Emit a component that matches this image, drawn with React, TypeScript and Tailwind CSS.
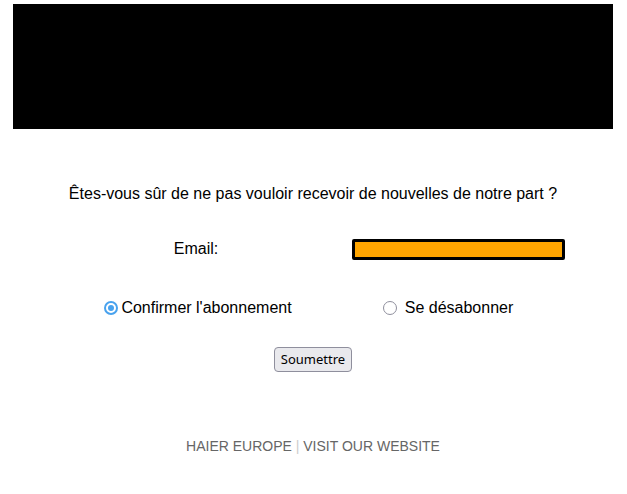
import React, { useState } from 'react';

interface RadioProps {
    checked: boolean;
    onSelect: () => void;
}

const Radio: React.FC<RadioProps> = ({ checked, onSelect }) => (
    <span
        role="radio"
        aria-checked={checked}
        onClick={onSelect}
        className={`flex h-[14px] w-[14px] shrink-0 cursor-pointer items-center justify-center rounded-full border ${
            checked ? 'border-[#48a2ee] border-[2px]' : 'border-[#8f8f9d]'
        } bg-white`}
    >
        {checked && <span className="h-[6px] w-[6px] rounded-full bg-[#48a2ee]" />}
    </span>
);

const App: React.FC = () => {
    const [choice, setChoice] = useState('confirm');

    return (
        <div className="min-h-screen bg-white pt-[4px] text-black" style={{ fontFamily: '"Liberation Sans", Arial, sans-serif' }}>
            <div className="ml-[13px] w-[600px]">
                <div className="h-[125px] bg-black" />

                <p className="mt-[56px] text-center text-[16px] leading-[18px]">
                    Êtes-vous sûr de ne pas vouloir recevoir de nouvelles de notre part ?
                </p>

                <div className="mt-[34px] ml-[47px] flex items-center">
                    <div className="w-[272px] text-center text-[16px]">Email:</div>
                    <div className="pl-[20px]">
                        <div className="h-[21px] w-[213px] rounded-[2px] border-[3px] border-black bg-[#ffa500]" />
                    </div>
                </div>

                <div className="mt-[35px] ml-[47px] flex items-center text-[16px]">
                    <div className="flex w-[272px] justify-center pl-[4px]">
                        <label className="flex items-center gap-[3px]">
                            <Radio checked={choice === 'confirm'} onSelect={() => setChoice('confirm')} />
                            Confirmer l'abonnement
                        </label>
                    </div>
                    <div className="flex w-[234px] justify-center pr-[2px]">
                        <label className="flex items-center gap-[8px]">
                            <Radio checked={choice === 'unsub'} onSelect={() => setChoice('unsub')} />
                            Se désabonner
                        </label>
                    </div>
                </div>

                <div className="mt-[27px] flex justify-center">
                    <button
                        className="h-[25px] rounded-[4px] border border-[#8f8f9d] bg-[#e9e9ed] px-[6px] text-[13px] text-black"
                        style={{ fontFamily: '"Noto Sans", sans-serif' }}
                    >
                        Soumettre
                    </button>
                </div>

                <div className="mt-[64px] text-center text-[14px] text-[#666666]">
                    HAIER EUROPE <span className="text-[#cccccc]">|</span> VISIT OUR WEBSITE
                </div>
            </div>
        </div>
    );
};

export default App;
